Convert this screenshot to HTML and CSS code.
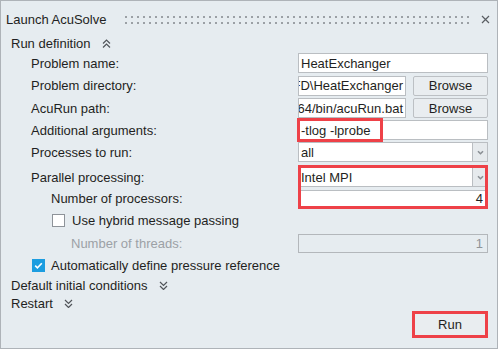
FILE: index.html
```html
<!DOCTYPE html>
<html lang="en">
<head>
  <meta charset="UTF-8">
  <meta name="viewport" content="width=device-width, initial-scale=1.0">
  <title>Launch AcuSolve</title>
  <link rel="stylesheet" href="styles.css">
</head>
<body>

<div class="window">

  <!-- barra de titulo -->
  <div class="titlebar">
    <span class="title">Launch AcuSolve</span>
    <span class="grip"></span>
    <svg class="close" width="9" height="9" viewBox="0 0 9 9"><path d="M1 1L8 8M8 1L1 8" stroke="#5a5e63" stroke-width="1.2" fill="none"/></svg>
  </div>

  <div class="section first">
    <span>Run definition</span>
    <svg width="9" height="9" viewBox="0 0 9 9"><path d="M1 4.5L4.5 1L8 4.5M1 8.5L4.5 5L8 8.5" stroke="#51555a" stroke-width="1.2" fill="none"/></svg>
  </div>

  <div class="row">
    <span>Problem name:</span>
    <div class="field">HeatExchanger</div>
  </div>

  <div class="row tall">
    <span>Problem directory:</span>
    <div class="pair">
      <div class="field end">CFD\HeatExchanger</div>
      <button class="btn">Browse</button>
    </div>
  </div>

  <div class="row">
    <span>AcuRun path:</span>
    <div class="pair">
      <div class="field end">win64/bin/acuRun.bat</div>
      <button class="btn">Browse</button>
    </div>
  </div>

  <div class="row">
    <span>Additional arguments:</span>
    <div class="field args"><span class="mark">-tlog -lprobe</span></div>
  </div>

  <div class="row">
    <span>Processes to run:</span>
    <div class="field select">
      <span>all</span>
      <span class="arrow"><svg width="7" height="5" viewBox="0 0 7 5"><path d="M1 1.2L3.5 3.7L6 1.2" stroke="#8a8f94" stroke-width="1.6" fill="none"/></svg></span>
    </div>
  </div>

  <div class="group">
    <span class="g-label1">Parallel processing:</span>
    <div class="field select g-field1">
      <span>Intel MPI</span>
      <span class="arrow"><svg width="7" height="5" viewBox="0 0 7 5"><path d="M1 1.2L3.5 3.7L6 1.2" stroke="#8a8f94" stroke-width="1.6" fill="none"/></svg></span>
    </div>
    <span class="g-label2 ind1">Number of processors:</span>
    <div class="field num g-field2">4</div>
    <div class="hl"></div>
  </div>

  <div class="check hybrid">
    <span class="box"></span>
    <span>Use hybrid message passing</span>
  </div>

  <div class="row">
    <span class="ind2 muted">Number of threads:</span>
    <div class="field num off">1</div>
  </div>

  <div class="check auto">
    <span class="box on"><svg width="13" height="13" viewBox="0 0 13 13"><path d="M3.2 6.6L5.4 8.8L9.8 4.2" stroke="#fff" stroke-width="1.6" fill="none"/></svg></span>
    <span>Automatically define pressure reference</span>
  </div>

  <div class="section mid">
    <span>Default initial conditions</span>
    <svg width="9" height="9" viewBox="0 0 9 9"><path d="M1 1L4.5 4.5L8 1M1 5L4.5 8.5L8 5" stroke="#51555a" stroke-width="1.2" fill="none"/></svg>
  </div>

  <div class="section last">
    <span>Restart</span>
    <svg width="9" height="9" viewBox="0 0 9 9"><path d="M1 1L4.5 4.5L8 1M1 5L4.5 8.5L8 5" stroke="#51555a" stroke-width="1.2" fill="none"/></svg>
  </div>

  <div class="footer">
    <button class="run">Run</button>
  </div>

</div>

</body>
</html>
```

FILE: styles.css
```css
* {
  box-sizing: border-box;
}
body {
  margin: 0;
  background: #fff;
  font-family: "Liberation Sans", Arial, sans-serif;
  font-size: 13px;
  color: #1f1f22;
}
.window {
  width: 498px;
  height: 349px;
  border: 1px solid #aeb3b8;
  background: #e6ecf0;
}

/* titulo */
.titlebar {
  height: 37px;
  display: flex;
  align-items: center;
  padding: 0 7px 0 5px;
}
.grip {
  flex: 1;
  height: 8px;
  margin: 0 11px 0 19px;
  background: conic-gradient(at 2px 2px, transparent 75%, #9ba0a5 0) 0 0 / 6px 6px;
}
.close {
  flex: none;
}

/* secoes */
.section {
  display: flex;
  align-items: center;
  padding-left: 10px;
  height: 19px;
}
.section svg {
  margin-left: 11px;
}
.section.first {
  height: 11px;
  margin-bottom: 3px;
}
.section.last {
  height: 16px;
}

/* linhas do formulario */
.row {
  display: grid;
  grid-template-columns: 1fr 190px;
  align-items: center;
  height: 22px;
  padding: 0 9px 0 30px;
}
.row.tall {
  height: 23px;
}
.ind1 {
  padding-left: 20px;
}
.ind2 {
  padding-left: 40px;
}
.muted {
  color: #9ca1a6;
}

.field {
  height: 20px;
  border: 1px solid #babec2;
  background: #fff;
  padding: 0 3px 0 2px;
  display: flex;
  align-items: center;
  white-space: nowrap;
  overflow: hidden;
}
.field.end {
  justify-content: flex-end;
  padding-right: 2px;
}
.field.args {
  padding-left: 0;
  overflow: visible;
}
.mark {
  height: 24px;
  margin-left: -2px;
  padding: 0 10px 0 1px;
  border: 3px solid #ee4148;
  display: flex;
  align-items: center;
}
.field.select {
  padding-right: 0;
}
.arrow {
  margin-left: auto;
  width: 15px;
  height: 100%;
  border-left: 1px solid #babec2;
  background: #e6eaed;
  display: flex;
  align-items: center;
  justify-content: center;
}
.field.num {
  height: 18px;
  justify-content: flex-end;
  padding-right: 4px;
}
.field.off {
  height: 19px;
  background: #e6ecf0;
  border-color: #b3b7bb;
  color: #8f9398;
}

.pair {
  display: grid;
  grid-template-columns: 108px 75px;
  gap: 7px;
}
.btn {
  height: 20px;
  padding: 0;
  border: 1px solid #bcc0c4;
  border-radius: 2px;
  background: #e9edf0;
  font: inherit;
  color: #1f1f22;
}

/* grupo destacado */
.group {
  display: grid;
  grid-template-columns: 1fr 190px;
  grid-template-rows: 22px 21px;
  align-items: center;
  padding: 0 9px 0 30px;
  margin-top: 3px;
}
.g-label1 {
  grid-area: 1 / 1;
}
.g-field1 {
  grid-area: 1 / 2;
}
.g-label2 {
  grid-area: 2 / 1;
}
.g-field2 {
  grid-area: 2 / 2;
}
.hl {
  grid-column: 2;
  grid-row: 1 / 3;
  align-self: stretch;
  margin-top: -1px;
  border: 3px solid #ee4148;
}

/* checkboxes */
.check {
  display: flex;
  align-items: center;
  height: 22px;
}
.check.hybrid {
  height: 23px;
  padding-left: 51px;
}
.check.auto {
  padding-left: 31px;
}
.box {
  width: 13px;
  height: 13px;
  border: 1px solid #8e9399;
  background: #fff;
  margin-right: 7px;
}
.check.auto .box {
  margin-right: 6px;
}
.box.on {
  border: none;
  background: #1c9de0;
}
.box svg {
  display: block;
}

/* rodape */
.footer {
  display: flex;
  justify-content: flex-end;
  padding-right: 9px;
}
.run {
  width: 76px;
  height: 27px;
  border: 3px solid #ee4148;
  background: #e9edf0;
  font: inherit;
  color: #1f1f22;
  padding: 0;
}
```
